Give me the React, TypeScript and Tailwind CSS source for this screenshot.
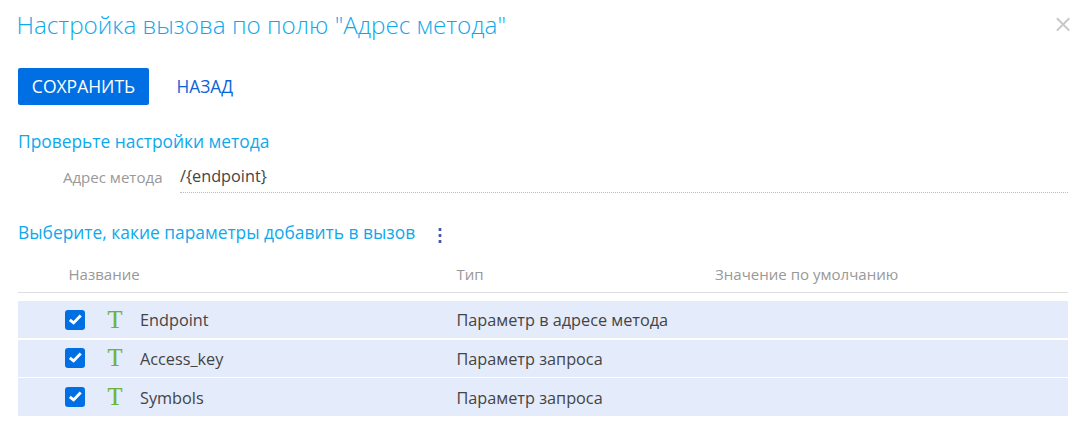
const rows = [
  { name: 'Endpoint', type: 'Параметр в адресе метода', box: 'h-[37px] mb-[2px]', pad: 'pt-[9px]', text: 'pt-[7px]' },
  { name: 'Access_key', type: 'Параметр запроса', box: 'h-[37px] mb-px', pad: 'pt-[8px]', text: 'pt-[7px]' },
  { name: 'Symbols', type: 'Параметр запроса', box: 'h-[38px]', pad: 'pt-[9px]', text: 'pt-[8px]' },
];

function Checkbox() {
  return (
    <span role="checkbox" aria-checked="true" className="flex h-5 w-5 items-center justify-center rounded-[3px] bg-[#006fe3]">
      <svg width="20" height="20" viewBox="0 0 20 20" fill="none">
        <path d="M4.8 9.8 8.6 12.9 15.7 5.6" stroke="#fff" strokeWidth="2.9" />
      </svg>
    </span>
  );
}

export default function App() {
  return (
    <main className="h-[424px] w-[1082px] overflow-hidden bg-white pl-[18px] pr-[14px] font-['Open_Sans',sans-serif] text-[#444]">
      <header className="flex h-[68px] justify-between">
        <h1 className="-ml-[1.5px] pt-[9px] text-[24.25px] leading-8 font-light whitespace-nowrap text-[#0da9ec]">Настройка вызова по полю "Адрес метода"</h1>
        <button aria-label="Закрыть" className="-mr-[2.5px] mt-[17px] h-[15px] w-[15px]">
          <svg width="15" height="15" viewBox="0 0 15 15" fill="none">
            <path d="M0.9 1.2 13.3 13.6M13.3 1.2 0.9 13.6" stroke="#c8c8c8" strokeWidth="2" />
          </svg>
        </button>
      </header>

      <div className="flex h-[37px]">
        <button className="w-[131px] rounded-[2px] bg-[#006fe3] text-[17.5px] leading-[37px] text-white">СОХРАНИТЬ</button>
        <button className="ml-[27.5px] text-[17.3px] leading-[37px] text-[#0d63d8]">НАЗАД</button>
      </div>

      <h2 className="mt-[24px] h-6 text-[17.39px] leading-6 whitespace-nowrap text-[#0da9ec]">Проверьте настройки метода</h2>
      <div className="mt-[10px] flex h-[30px]">
        <label className="w-[144.5px] pt-[4px] text-right text-[15.05px] leading-5 text-[#999]">Адрес метода</label>
        <div className="ml-[17.5px] flex-1 border-b border-dotted border-[#bbb] pt-px text-[16.25px] leading-6">/{'{endpoint}'}</div>
      </div>

      <div className="mt-[27px] flex h-6">
        <h2 className="w-[420px] text-[17.39px] leading-6 whitespace-nowrap text-[#0da9ec]">Выберите, какие параметры добавить в вызов</h2>
        <svg className="mt-2" width="4" height="16" viewBox="0 0 4 16" fill="#3c55b0">
          <rect x="0.6" y="0.1" width="2.8" height="2.8" rx="0.7" />
          <rect x="0.6" y="6.1" width="2.8" height="2.8" rx="0.7" />
          <rect x="0.6" y="12.1" width="2.8" height="2.8" rx="0.7" />
        </svg>
      </div>

      <div className="mt-[11px] flex h-[38px] border-b border-[#dedede] pt-[9px] text-[15.05px] leading-5 text-[#999]">
        <span className="w-[438.5px] pl-[50.5px]">Название</span>
        <span className="w-[258.5px]">Тип</span>
        <span>Значение по умолчанию</span>
      </div>

      <div className="pt-2">
        {rows.map((r) => (
          <div key={r.name} className={`flex bg-[#e4ebfa] text-[16.25px] leading-6 ${r.box}`}>
            <div className={`w-[89.5px] pl-[47px] ${r.pad}`}><Checkbox /></div>
            <div className={`w-[32.5px] ${r.pad}`}>
              <span className="block font-['Liberation_Serif',serif] text-[24.5px] leading-5 text-[#6cb33a] [-webkit-text-stroke:0.15px_#6cb33a]">T</span>
            </div>
            <div className={`w-[316.5px] ${r.text}`}>{r.name}</div>
            <div className={r.text}>{r.type}</div>
          </div>
        ))}
      </div>
    </main>
  );
}
